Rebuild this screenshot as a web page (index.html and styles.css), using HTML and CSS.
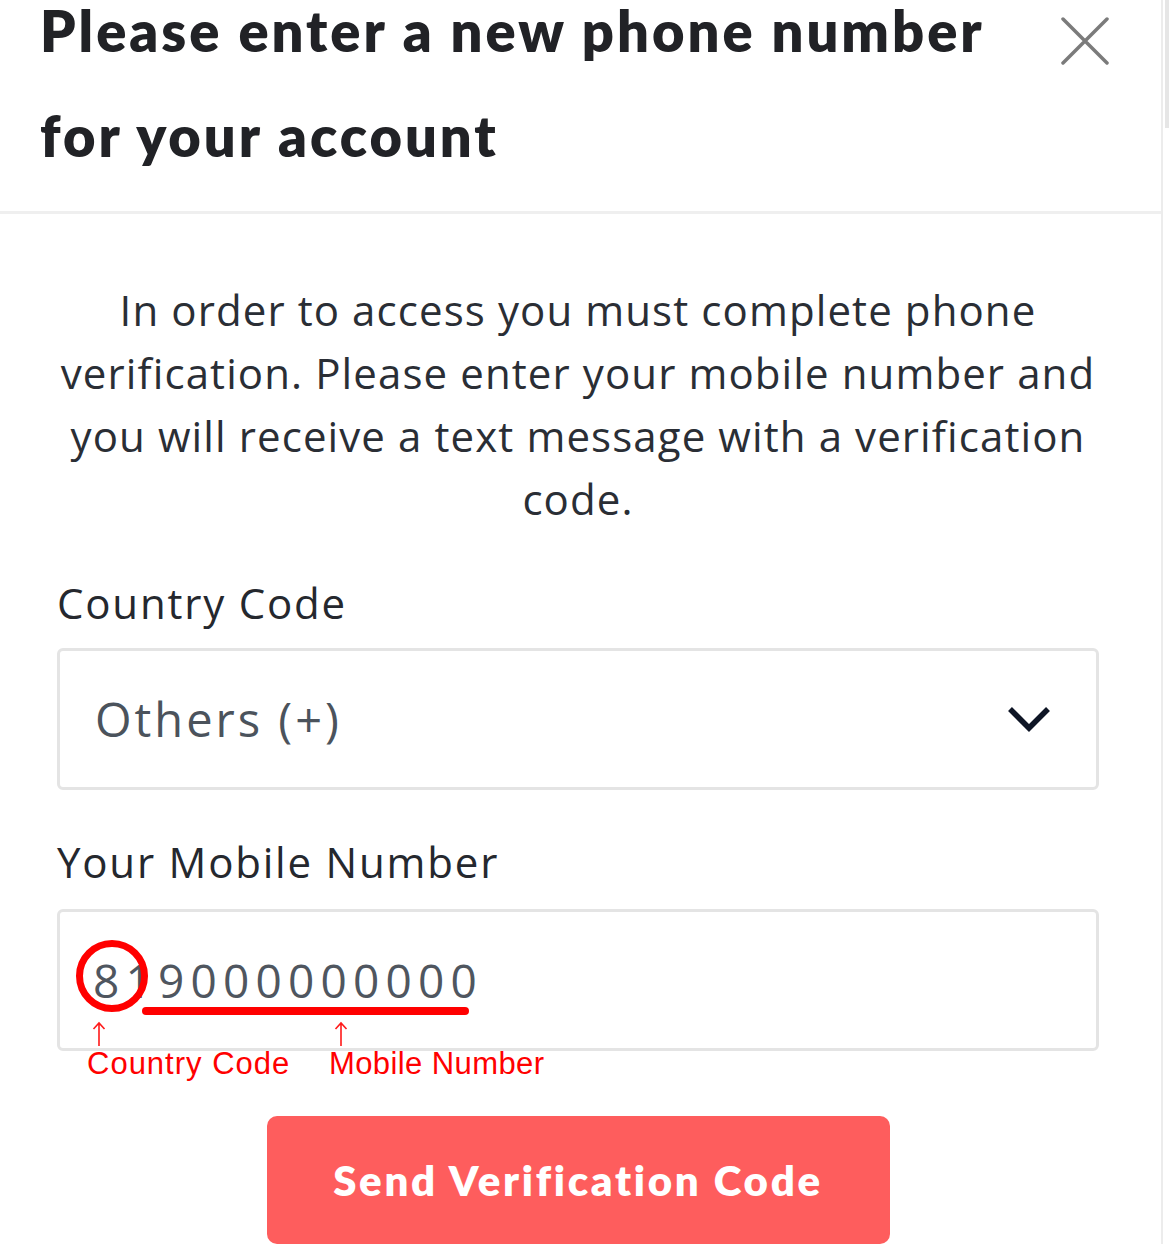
FILE: index.html
```html
<!DOCTYPE html>
<html>
<head>
<meta charset="utf-8">
<link rel="stylesheet" href="styles.css">
</head>
<body>
<div class="modal">
  <header class="head">
    <h1 class="title">Please enter a new phone number for your account</h1>
    <button class="close" aria-label="Close">
      <svg width="48" height="48" viewBox="0 0 48 48"><path d="M2 2 L46 46 M46 2 L2 46" stroke="#7b7b7b" stroke-width="3.5" stroke-linecap="round" fill="none"/></svg>
    </button>
  </header>
  <div class="scroll-thumb"></div>
  <main class="body">
    <p class="intro">In order to access you must complete phone verification. Please enter your mobile number and you will receive a text message with a verification code.</p>
    <label class="label">Country Code</label>
    <div class="select">
      <span class="select-text">Others (+)</span>
      <svg class="chev" width="44" height="28" viewBox="0 0 44 28"><path d="M3 4 L22 23 L41 4" stroke="#0e1525" stroke-width="5.5" fill="none"/></svg>
    </div>
    <label class="label label2">Your Mobile Number</label>
    <div class="input">
      <span class="input-text">819000000000</span>
      <span class="circle"></span>
      <span class="underline"></span>
      <svg class="arrow arrow1" width="14" height="26" viewBox="0 0 14 26"><path d="M7 25 L7 2 M1.5 8 L7 2 L12.5 8" stroke="#ff1a1a" stroke-width="1.6" fill="none"/></svg>
      <svg class="arrow arrow2" width="14" height="26" viewBox="0 0 14 26"><path d="M7 25 L7 2 M1.5 8 L7 2 L12.5 8" stroke="#ff1a1a" stroke-width="1.6" fill="none"/></svg>
      <span class="note note1">Country Code</span>
      <span class="note note2">Mobile Number</span>
    </div>
    <div class="actions">
      <button class="send">Send Verification Code</button>
    </div>
  </main>
</div>
</body>
</html>
```
FILE: styles.css
```css
* { box-sizing: border-box; }
html, body { margin: 0; padding: 0; background: #fff; }
body { font-family: "Open Sans", Lato, sans-serif; overflow: hidden; }
.modal { width: 1163px; height: 1244px; border-right: 2px solid #ececec; position: relative; }
.head {
  height: 214px;
  border-bottom: 3px solid #efefef;
  display: flex;
  justify-content: space-between;
  align-items: flex-start;
  padding: 0 52px 0 40px;
}
.title {
  margin: -22px 0 0 0;
  font-family: Lato, sans-serif;
  font-size: 56px;
  line-height: 105px;
  font-weight: 800;
  color: #212226;
  width: 960px;
  letter-spacing: 3px;
}
.close {
  border: 0; background: none; padding: 0; margin-top: 17px;
  width: 48px; height: 48px;
}
.close svg { display: block; }
.scroll-thumb { position: absolute; right: -8px; top: 0; width: 4px; height: 128px; background: #e6e6e6; }
.body { padding: 64px 62px 0 57px; }
.intro {
  margin: 0 -3px;
  text-align: center;
  font-size: 42px;
  line-height: 63px;
  color: #2a2e35;
  letter-spacing: 1.1px;
}
.label {
  display: block;
  font-size: 42px;
  line-height: 50px;
  color: #25282e;
  margin-top: 48px;
  letter-spacing: 1.8px;
}
.label2 { margin-top: 47px; }
.select, .input {
  margin-top: 20px;
  height: 142px;
  border: 3px solid #e4e4e4;
  border-radius: 6px;
  display: flex;
  align-items: center;
  position: relative;
}
.select { justify-content: space-between; padding: 0 45px 0 35px; }
.select-text { font-size: 47px; color: #4b535c; letter-spacing: 3px; }
.chev { display: block; }
.input { padding: 0 0 0 33px; margin-top: 22px; }
.input-text { font-size: 46px; color: #4f565f; letter-spacing: 6.2px; }
.circle {
  position: absolute; left: 16px; top: 28px;
  width: 72px; height: 72px; border: 7px solid #ff0000; border-radius: 50%;
}
.underline {
  position: absolute; left: 82px; top: 95px;
  width: 327px; height: 8px; background: #ff0000; border-radius: 4px;
}
.arrow { position: absolute; top: 109px; display: block; }
.arrow1 { left: 32px; }
.arrow2 { left: 274px; }
.note {
  position: absolute; top: 134px; font-size: 31px; line-height: 36px; color: #ff0000;
  font-family: "Liberation Sans", Arial, sans-serif; white-space: nowrap; letter-spacing: 0.6px;
}
.note1 { left: 27px; letter-spacing: 1px; }
.note2 { left: 269px; letter-spacing: 0.4px; }
.actions { display: flex; justify-content: center; margin-top: 65px; }
.send {
  width: 623px; height: 128px;
  background: #fe5d5d; color: #fff; border: 0; border-radius: 10px;
  font-family: Lato, sans-serif; font-weight: 800; font-size: 42px; letter-spacing: 2.7px;
}
```
